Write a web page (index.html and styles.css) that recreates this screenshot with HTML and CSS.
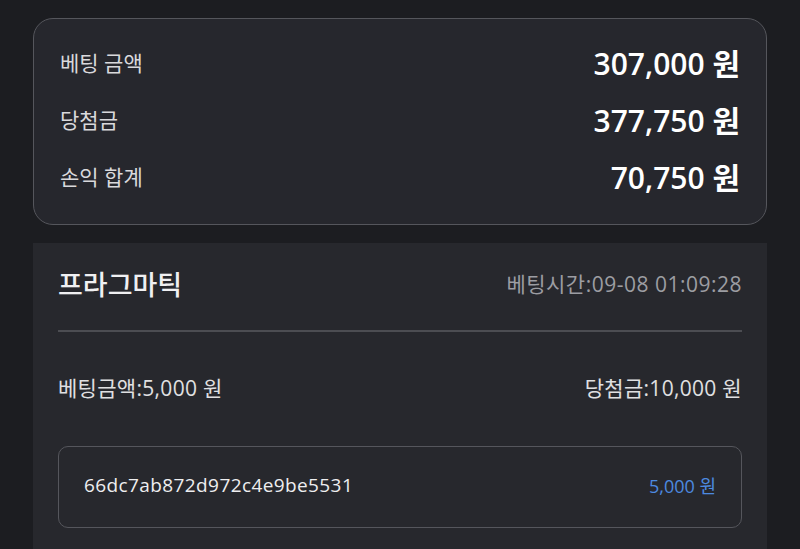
FILE: index.html
```html
<!DOCTYPE html>
<html lang="ko">
<head>
<meta charset="utf-8">
<link rel="stylesheet" href="styles.css">
</head>
<body>
<div class="page">
  <section class="summary">
    <div class="row"><span class="label">베팅 금액</span><span class="value">307,000 원</span></div>
    <div class="row"><span class="label">당첨금</span><span class="value">377,750 원</span></div>
    <div class="row"><span class="label">손익 합계</span><span class="value">70,750 원</span></div>
  </section>
  <section class="panel">
    <div class="head">
      <span class="title">프라그마틱</span>
      <span class="time">베팅시간:09-08 01:09:28</span>
    </div>
    <div class="divider"></div>
    <div class="bet">
      <span>베팅금액:5,000 원</span>
      <span>당첨금:10,000 원</span>
    </div>
    <div class="ticket">
      <span class="hash">66dc7ab872d972c4e9be5531</span>
      <span class="amount">5,000 원</span>
    </div>
  </section>
</div>
</body>
</html>
```
FILE: styles.css
```css
html, body {
  margin: 0;
  padding: 0;
  background: #1c1d21;
  height: 100%;
  overflow: hidden;
}
body {
  font-family: "Open Sans", "Noto Sans CJK KR", sans-serif;
  color: #e2e2e4;
}
.page {
  padding: 18px 33px 0;
  display: flex;
  flex-direction: column;
  gap: 18px;
}
.summary {
  background: #26272d;
  border: 1px solid #55565c;
  border-radius: 20px;
  padding: 14px 26px 20px;
  display: flex;
  flex-direction: column;
}
.row {
  height: 57px;
  display: flex;
  align-items: center;
  justify-content: space-between;
}
.label {
  font-size: 21px;
  color: #d9d9dc;
}
.value {
  font-size: 30px;
  font-weight: 600;
  color: #ffffff;
}
.panel {
  background: #27282d;
  padding: 20px 25px 40px;
  display: flex;
  flex-direction: column;
}
.head {
  height: 40px;
  display: flex;
  align-items: center;
  justify-content: space-between;
}
.title {
  font-size: 27px;
  font-weight: 500;
  color: #f0f0f2;
}
.time {
  font-size: 21px;
  letter-spacing: 0.5px;
  color: #9c9da2;
}
.divider {
  margin-top: 27px;
  height: 2px;
  background: #4c4d52;
}
.bet {
  margin-top: 40px;
  height: 30px;
  display: flex;
  align-items: center;
  justify-content: space-between;
  font-size: 21px;
  letter-spacing: 0.3px;
  color: #e0e0e2;
}
.ticket {
  margin-top: 44px;
  height: 76px;
  border: 1px solid #55565c;
  border-radius: 10px;
  padding: 0 25px 4px;
  display: flex;
  align-items: center;
  justify-content: space-between;
}
.hash {
  font-size: 19px;
  letter-spacing: 0.4px;
  color: #eeeef0;
}
.amount {
  font-size: 18px;
  color: #4d8ae0;
}
```
